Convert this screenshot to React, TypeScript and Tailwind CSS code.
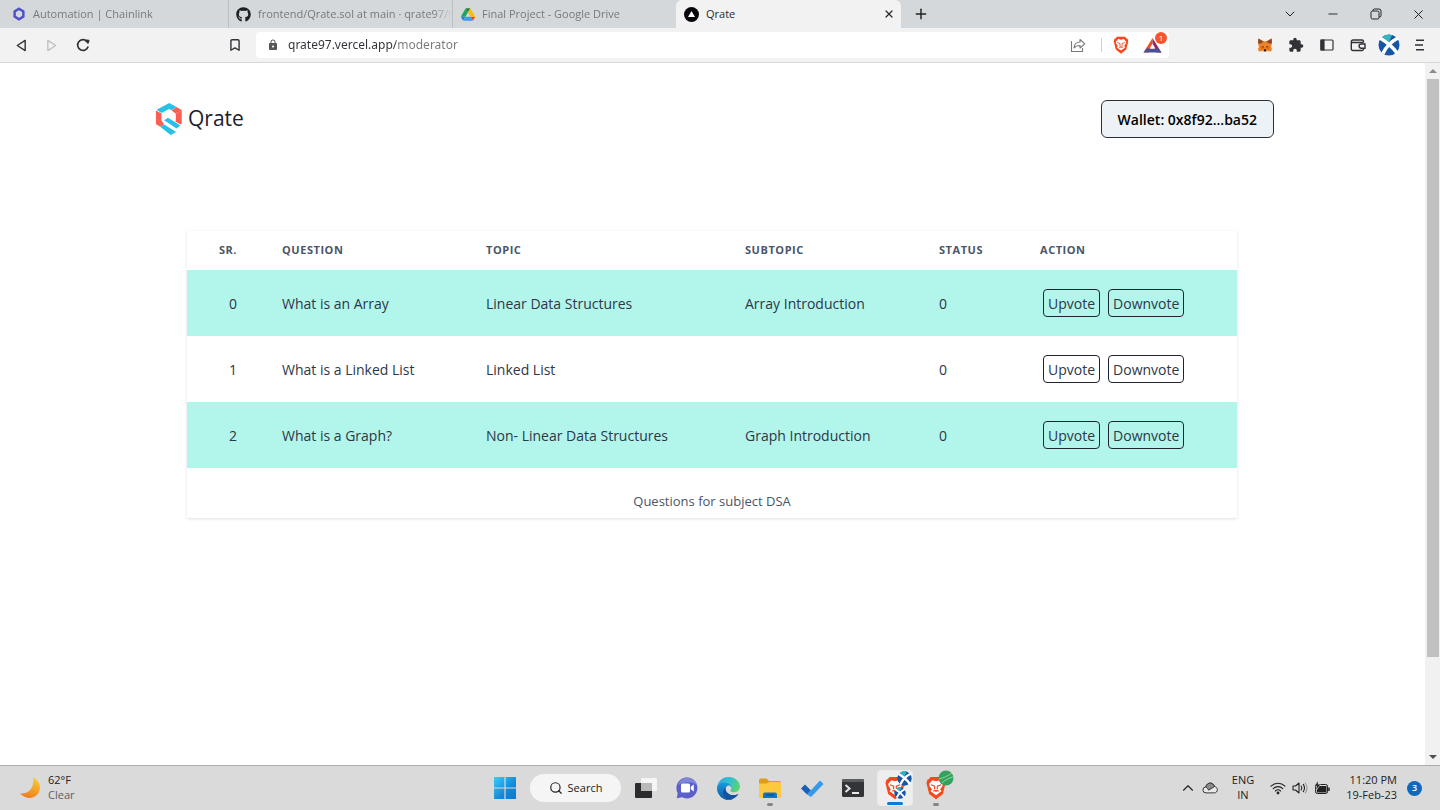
import type { ReactNode } from 'react'
import { Bookmark, ChevronDown, ChevronUp, Minus, Plus, Search, X } from 'lucide-react'
import { FaGithub } from 'react-icons/fa'
import { MdExtension, MdLock } from 'react-icons/md'
import { SiBrave } from 'react-icons/si'

const questions = [
  { id: 0, question: 'What is an Array', topic: 'Linear Data Structures', subtopic: 'Array Introduction', status: 0 },
  { id: 1, question: 'What is a Linked List', topic: 'Linked List', subtopic: '', status: 0 },
  { id: 2, question: 'What is a Graph?', topic: 'Non- Linear Data Structures', subtopic: 'Graph Introduction', status: 0 },
]

function ChainlinkIcon() {
  return (
    <svg viewBox="0 0 14 16" className="h-[14px] w-[14px] shrink-0">
      <path d="M7 2 12 5v6l-5 3-5-3V5z" fill="none" stroke="#4f4fcb" strokeWidth="2.8" />
    </svg>
  )
}

function DriveIcon() {
  return (
    <svg viewBox="0 0 87.3 78" className="h-[13px] w-[14px] shrink-0">
      <path d="m6.6 66.85 3.85 6.65c.8 1.4 1.95 2.5 3.3 3.3L27.5 53H0c0 1.55.4 3.1 1.2 4.5z" fill="#2a7de1" />
      <path d="M43.65 25 29.9 1.2c-1.35.8-2.5 1.9-3.3 3.3l-25.4 44A9.06 9.06 0 0 0 0 53h27.5z" fill="#1fa463" />
      <path d="M73.55 76.8c1.35-.8 2.5-1.9 3.3-3.3l1.6-2.75L86.1 57.5c.8-1.4 1.2-2.95 1.2-4.5H59.8l5.85 11.5z" fill="#ea4335" />
      <path d="M43.65 25 57.4 1.2C56.05.4 54.5 0 52.9 0H34.4c-1.6 0-3.15.45-4.5 1.2z" fill="#188038" />
      <path d="M59.8 53H27.5L13.75 76.8c1.35.8 2.9 1.2 4.5 1.2h50.8c1.6 0 3.15-.45 4.5-1.2z" fill="#3b9cf0" />
      <path d="m73.4 26.5-12.7-22c-.8-1.4-1.95-2.5-3.3-3.3L43.65 25 59.8 53h27.45c0-1.55-.4-3.1-1.2-4.5z" fill="#fbbc04" />
    </svg>
  )
}

function VercelIcon() {
  return (
    <svg viewBox="0 0 15 15" className="h-[15px] w-[15px] shrink-0">
      <circle cx="7.5" cy="7.5" r="7.5" fill="#08080c" />
      <path d="M7.5 4 11 10H4z" fill="#fff" />
    </svg>
  )
}

// white lion on the orange shield
function BraveIcon({ className = '' }: { className?: string }) {
  return (
    <svg viewBox="0 0 22 26" className={className}>
      <path d="M5 1h12l2 2.500 1.500.3L21.500 8l-.6 2L18.500 19.500 11 25.500 3.500 19.500 1.100 10 .5 8l1-4.200L3 3.500z" fill="#f9461c" />
      <path d="M7 4.500 11 5.500 15 4.500l3.500 3.800-.5 2.700-2.500 3.500 1.500 2-2 1.500-4 3-4-3-2-1.500 1.500-2L4 11l-.5-2.700z" fill="#fff" />
      <path d="M5.500 9.500 9.500 11v3.500M16.500 9.500 12.500 11v3.500M8 16.500l3-1 3 1M11 15.500v2" fill="none" stroke="#f9461c" strokeWidth="1.300" />
    </svg>
  )
}

function MetamaskIcon() {
  return (
    <svg viewBox="0 0 32 30" className="h-[14px] w-4">
      <path d="M2 1 13 7h6L30 1l1 10-2 8 2 5-2 5-8-1-3 2h-4l-3-2-8 1-2-5 2-5-2-8z" fill="#ee8427" />
      <path d="M2 1 13 8 8 12l-6 0-1-3zM30 1 19 8l5 4h6l1-3z" fill="#8a4a2c" />
      <path d="m6 18 7-1 1 5-6 2zM26 18l-7-1-1 5 6 2z" fill="#d9691c" />
      <path d="m9 17 4 1v3zM23 17l-4 1v3z" fill="#2b3340" />
      <path d="m13 26 1-2h4l1 2-1 3h-4z" fill="#241b17" />
      <path d="m11 26 2-1 1 4 4 0 1-4 2 1-3 4h-4z" fill="#d8c4b3" />
    </svg>
  )
}

function ProfileIcon({ className = '' }: { className?: string }) {
  return (
    <svg viewBox="0 0 22 22" className={className}>
      <circle cx="11" cy="11" r="10.5" fill="#1756a5" />
      <path d="M4 3A10.5 10.5 0 0 1 14 1l-3 7z" fill="#35b3c2" />
      <path d="M2 4c5 3 12 8 17 15M20 4C14 7 8 13 5 19.500" stroke="#fff" strokeWidth="3.600" fill="none" />
    </svg>
  )
}

function ShareIcon() {
  return (
    <svg viewBox="0 0 16 16" className="h-4 w-4" fill="none" stroke="#777a7d" strokeWidth="1.1" strokeLinejoin="round">
      <path d="M1.5 4v10.5h11V11" />
      <path d="M4 11c.3-4 2.500-6 6-6V2.500l4.800 4.300L10 11V8.500C7.500 8.500 5.500 9 4 11z" />
    </svg>
  )
}

function BatIcon() {
  return (
    <svg viewBox="0 0 24 18" className="h-[18px] w-6">
      <path d="M9.500 2 .500 16.500h5L9.500 9z" fill="#ee5024" />
      <path d="M9.500 2 18.500 16.500h-5L9.500 9z" fill="#8f2d62" />
      <path d="M.5 16.500l3-4h12l3 4z" fill="#4c5193" />
      <path d="M9.500 7.500 12.300 12.500H6.700z" fill="#fff" />
    </svg>
  )
}

function QrateLogo() {
  return (
    <svg viewBox="45 39 84 98" className="h-8 w-[28px]">
      <path d="M47 62 64 71v21l7 12-11 8-13-9zM126 62 108 72v20l-2 3 16 10 4-3z" fill="#fa5f52" />
      <path d="M49 60 88 39l22 12-15 10-8-4-23 13z" fill="#27c1e8" />
      <path d="M110 51 127 61 108 72 95 62z" fill="#fa5f52" />
      <path d="M72 92 84 84l38 24-12 9z" fill="#27c1e8" />
      <path d="M60 112 71 104l38 24-17 9z" fill="#27c1e8" />
    </svg>
  )
}

function EdgeIcon() {
  return (
    <svg viewBox="0 0 256 256" className="h-[23px] w-[23px]">
      <defs>
        <linearGradient id="edgeTop" x1="0" y1="0.3" x2="1" y2="0.6">
          <stop offset="0" stopColor="#2aa8e0" />
          <stop offset="0.5" stopColor="#32c1cf" />
          <stop offset="1" stopColor="#5fd668" />
        </linearGradient>
        <linearGradient id="edgeMid" x1="0" y1="0" x2="0" y2="1">
          <stop offset="0" stopColor="#1b9de2" />
          <stop offset="1" stopColor="#0f59a4" />
        </linearGradient>
      </defs>
      <path d="M231.07 190.54c-3.400 1.780-6.930 3.330-10.550 4.640a101.900 101.900 0 0 1-35.900 6.460c-47.320 0-88.540-32.550-88.540-74.320A31.480 31.480 0 0 1 112.500 100c-42.800 1.800-53.800 46.400-53.800 72.530 0 73.880 68.100 81.370 82.760 81.370 7.910 0 19.840-2.300 27-4.560l1.310-.44a128.340 128.340 0 0 0 66.600-52.800 4 4 0 0 0-5.320-5.560z" fill="#12529f" />
      <path d="M105.730 241.420a79.200 79.200 0 0 1-22.740-21.340 80.720 80.720 0 0 1 29.530-120.100c3.120-1.470 8.450-4.130 15.540-4a32.350 32.350 0 0 1 25.690 13 31.880 31.880 0 0 1 6.360 18.660c0-.21 24.460-79.600-80-79.600-43.900 0-80 41.660-80 78.210a130.150 130.150 0 0 0 12.110 56 128 128 0 0 0 156.380 67.110 75.550 75.550 0 0 1-62.780-8z" fill="url(#edgeMid)" />
      <path d="M152.330 148.860c-.81 1.050-3.300 2.500-3.300 5.660 0 2.610 1.700 5.120 4.720 7.230 14.380 10 41.490 8.680 41.560 8.680a59.560 59.560 0 0 0 30.270-8.350A61.380 61.380 0 0 0 256 109.200c.26-22.410-8-37.310-11.340-43.910C223.460 23.840 177.720 0 128 0A128 128 0 0 0 0 126.200c.48-36.540 36.800-66.050 80-66.050 3.500 0 23.460.34 42 10.070 16.340 8.580 24.900 18.940 30.850 29.210 6.180 10.670 7.280 24.150 7.280 29.520 0 5.370-2.740 13.330-7.800 19.910z" fill="url(#edgeTop)" />
    </svg>
  )
}

function WindowsIcon() {
  return (
    <svg viewBox="0 0 22 22" className="h-[22px] w-[22px]">
      <defs>
        <linearGradient id="win" x1="0" y1="0" x2="1" y2="1">
          <stop offset="0" stopColor="#3ccbf4" />
          <stop offset="0.6" stopColor="#1588d8" />
          <stop offset="1" stopColor="#0a78d0" />
        </linearGradient>
      </defs>
      <path d="M0 0h10.400v10.400H0zM11.600 0H22v10.400H11.600zM0 11.600h10.400V22H0zM11.600 11.600H22V22H11.600z" fill="url(#win)" />
    </svg>
  )
}

function TaskViewIcon() {
  return (
    <svg viewBox="0 0 22 22" className="h-[22px] w-[22px]">
      <rect x="0" y="6" width="17" height="15" rx="1" fill="#2b2b30" />
      <rect x="6" y="1" width="16" height="13" rx="1" fill="#f5f5f5" />
      <rect x="6" y="6" width="11" height="8" fill="#b9b9b9" />
    </svg>
  )
}

function ChatIcon() {
  return (
    <svg viewBox="0 0 22 22" className="h-[22px] w-[22px]">
      <path d="M11 .5A10.500 10.500 0 1 1 6 20.300L.8 21.300l.9-5.200A10.500 10.500 0 0 1 11 .5z" fill="#5b5fc7" />
      <path d="M11 .5A10.500 10.500 0 0 1 21 8C15 4 8 5 2 8 3.500 3.500 7 .5 11 .5z" fill="#7f86d8" />
      <rect x="5" y="6.500" width="9" height="9" rx="1.500" fill="#fff" />
      <path d="m14.800 9.800 3-2.300v7l-3-2.300z" fill="#fff" />
    </svg>
  )
}

function ExplorerIcon() {
  return (
    <svg viewBox="0 0 24 22" className="h-[22px] w-6">
      <path d="M1 3a1.500 1.500 0 0 1 1.500-1.500h6L11 4h10.500A1.500 1.500 0 0 1 23 5.500V9H1z" fill="#e09b1d" />
      <path d="M1 6.500h8L11 5h11a1 1 0 0 1 1 1v14a1 1 0 0 1-1 1H2a1 1 0 0 1-1-1z" fill="#fdc93f" />
      <path d="M5 21v-3.500A2 2 0 0 1 7 15.500h10a2 2 0 0 1 2 2V21z" fill="#1272c4" />
      <path d="M8 18h8" stroke="#0b4f94" strokeWidth="1.300" />
    </svg>
  )
}

function TodoIcon() {
  return (
    <svg viewBox="0 0 24 20" className="h-5 w-6">
      <path d="m1 10.500 4-4 6 6-4 4z" fill="#1a5fb4" />
      <path d="M7 16.500 20 2.500l3.500 3.500-12.500 13z" fill="#3699ea" />
    </svg>
  )
}

function TerminalIcon() {
  return (
    <svg viewBox="0 0 24 20" className="h-5 w-6">
      <rect x="1" y="1" width="22" height="18" rx="1.500" fill="#333437" />
      <path d="M1 4V2.500A1.500 1.500 0 0 1 2.500 1h19A1.500 1.500 0 0 1 23 2.500V4z" fill="#5d5e61" />
      <path d="m4.500 7 4 3.500-4 3.500" fill="none" stroke="#e4e4e4" strokeWidth="2" />
      <path d="M11 15h7" stroke="#fff" strokeWidth="1.800" />
    </svg>
  )
}

function WifiIcon() {
  return (
    <svg viewBox="0 0 16 14" className="h-[14px] w-4" fill="none" stroke="#222" strokeWidth="1.100" strokeLinecap="round">
      <path d="M1 5.200c4-4 10-4 14 0M3.200 7.600c2.800-2.700 6.800-2.700 9.600 0M5.400 10c1.500-1.400 3.700-1.400 5.200 0" />
      <circle cx="8" cy="12" r="0.900" fill="#222" />
    </svg>
  )
}

function VolumeIcon() {
  return (
    <svg viewBox="0 0 16 14" className="h-[14px] w-4" fill="none" stroke="#222" strokeWidth="1.100" strokeLinecap="round" strokeLinejoin="round">
      <path d="M1 5v4h2.500L7 12V2L3.500 5z" />
      <path d="M9.200 5c.8 1.200.8 2.800 0 4M11.300 3.400c1.500 2.200 1.500 5 0 7.200" />
      <path d="M13.300 2c2 3 2 7 0 10" stroke="#999" />
    </svg>
  )
}

function BatteryIcon() {
  return (
    <svg viewBox="0 0 16 14" className="h-[14px] w-4">
      <rect x="1.500" y="3.500" width="12" height="9" rx="1.800" fill="none" stroke="#222" />
      <path d="M14.200 6.500h1.500v3.600h-1.500z" fill="#222" />
      <path d="M5.500 5H12.500v6.500H2.800V9z" fill="#222" />
      <path d="M4 0 .5 5h2.200l-.8 4L6.500 3.500H4z" fill="#222" stroke="#dadada" strokeWidth=".4" />
    </svg>
  )
}

function CloudIcon() {
  return (
    <svg viewBox="0 0 18 14" className="h-[14px] w-4" stroke="#333" strokeWidth="1.100">
      <path d="M4.500 12.500a3.300 3.300 0 0 1-.3-6.600C5 3 7 1.500 9.200 1.500c2.400 0 4.200 1.500 4.800 3.900 2 .2 3.300 1.700 3.300 3.500 0 2-1.500 3.600-3.500 3.600z" fill="#e9e9e9" />
      <path d="M4.200 5.900C5 3 7 1.500 9.200 1.500c2.400 0 4.200 1.500 4.800 3.900l-6.500 4C6.500 7.500 5.500 6.500 4.200 5.900z" fill="#8b8b8b" />
    </svg>
  )
}

function Tab({ icon, title, className = '' }: { icon: ReactNode; title: string; className?: string }) {
  return (
    <div className={`flex min-w-0 items-center gap-[7px] border-r border-[#bcbfc2] ${className}`}>
      {icon}
      <span className="min-w-0 flex-1 overflow-hidden whitespace-nowrap text-[#77797c] mask-[linear-gradient(90deg,#000_90%,transparent)]">
        {title}
      </span>
    </div>
  )
}

function ToolButton({ label, children }: { label: string; children: ReactNode }) {
  return (
    <button aria-label={label} className="flex h-7 w-[31px] shrink-0 items-center justify-center text-[#303236]">
      {children}
    </button>
  )
}

function WindowButton({ label, children }: { label: string; children: ReactNode }) {
  return (
    <button aria-label={label} className="flex h-7 w-[43px] items-center justify-center text-[#222]">
      {children}
    </button>
  )
}

function TaskButton({ label, children, active, running }: { label: string; children: ReactNode; active?: boolean; running?: boolean }) {
  return (
    <button
      aria-label={label}
      className={`relative flex h-9 w-9 items-center justify-center rounded ${active ? 'border border-[#ebebeb] bg-[#eeeeee]' : ''}`}
    >
      {children}
      {active && <span className="absolute bottom-0 h-[3px] w-4 rounded-full bg-[#1479cf]" />}
      {running && <span className="absolute bottom-0 h-[3px] w-[6px] rounded-full bg-[#858585]" />}
    </button>
  )
}

function BrowserChrome() {
  return (
    <header className="border-b border-[#d6d7d8] bg-[#f2f2f3]">
      <div className="flex h-7 bg-[#d5d8db] text-[11px]">
        <Tab icon={<ChainlinkIcon />} title="Automation | Chainlink" className="w-[229px] pl-3" />
        <Tab icon={<FaGithub className="h-[15px] w-[15px] shrink-0 text-[#1c1f24]" />} title="frontend/Qrate.sol at main · qrate97/fr" className="w-[224px] pl-[7px]" />
        <Tab icon={<DriveIcon />} title="Final Project - Google Drive" className="w-[223px] border-r-0 pl-2" />
        <div className="flex w-[225px] items-center gap-[7px] rounded-t-md bg-[#f2f2f3] pl-2 text-[#2a2b2d]">
          <VercelIcon />
          <span className="flex-1">Qrate</span>
          <button aria-label="Close tab" className="flex w-6 justify-center">
            <X size={12} strokeWidth={2.5} />
          </button>
        </div>
        <button aria-label="New tab" className="flex w-10 items-center justify-center text-[#222]">
          <Plus size={16} strokeWidth={2.2} />
        </button>
        <div className="ml-auto flex">
          <WindowButton label="Search tabs"><ChevronDown size={16} strokeWidth={1.5} /></WindowButton>
          <WindowButton label="Minimize"><Minus size={14} strokeWidth={1.6} /></WindowButton>
          <WindowButton label="Restore">
            <svg viewBox="0 0 12 12" className="h-3 w-3" fill="none" stroke="currentColor">
              <rect x="1" y="3" width="8" height="8" rx="1.500" />
              <path d="M3 3V2.500A1.500 1.500 0 0 1 4.500 1H9a2 2 0 0 1 2 2v4.500A1.500 1.500 0 0 1 9.500 9H9" />
            </svg>
          </WindowButton>
          <WindowButton label="Close"><X size={15} strokeWidth={1.6} /></WindowButton>
        </div>
      </div>

      <div className="flex h-[34px] items-center px-[5px]">
        <ToolButton label="Back">
          <svg viewBox="0 0 12 14" className="h-[13px] w-3" fill="none" stroke="currentColor" strokeWidth="1.500" strokeLinejoin="round">
            <path d="M10.500 1.500v11L2 7z" />
          </svg>
        </ToolButton>
        <ToolButton label="Forward">
          <svg viewBox="0 0 12 14" className="h-[13px] w-3 text-[#bfc0c2]" fill="none" stroke="currentColor" strokeWidth="1.500" strokeLinejoin="round">
            <path d="M1.500 1.500v11L10 7z" />
          </svg>
        </ToolButton>
        <ToolButton label="Reload">
          <svg viewBox="0 0 14 14" className="h-[14px] w-[14px]" fill="none" stroke="currentColor" strokeWidth="1.700">
            <path d="M12.200 8.600A5.400 5.400 0 1 1 11 3.300" />
            <path d="M8.500 2.500c1.500-1 3.500-1.500 5-.5-.2 1.800-.5 3-1.500 4z" fill="currentColor" stroke="none" />
          </svg>
        </ToolButton>
        <div className="ml-[121px] mr-[6px] flex">
          <ToolButton label="Bookmark this page"><Bookmark size={14} strokeWidth={2.400} /></ToolButton>
        </div>
        <div className="flex h-[26px] flex-1 items-center rounded bg-white pl-[11px] pr-[2px]">
          <MdLock className="h-3 w-3 shrink-0 text-[#55575a]" />
          <input
            aria-label="Address"
            defaultValue="qrate97.vercel.app/moderator"
            className="ml-[9px] min-w-0 flex-1 bg-[linear-gradient(90deg,#303236_0_108px,#77797c_108px)] bg-clip-text font-['Noto_Sans',sans-serif] text-[12px] text-transparent outline-none"
          />
          <button aria-label="Share"><ShareIcon /></button>
          <span className="ml-[15px] mr-[11px] h-[14px] w-px bg-[#c9d0d4]" />
          <button aria-label="Brave Shields"><BraveIcon className="h-[18px] w-4" /></button>
          <button aria-label="Brave Rewards" className="relative ml-[14px]">
            <BatIcon />
            <span className="absolute -top-1 right-0 flex h-3 w-3 items-center justify-center rounded-full bg-[#fb542b] text-[8px] text-white">1</span>
          </button>
        </div>
        <div className="ml-[80px] flex items-center">
          <ToolButton label="MetaMask"><MetamaskIcon /></ToolButton>
          <ToolButton label="Extensions"><MdExtension size={16} /></ToolButton>
          <ToolButton label="Sidebar">
            <svg viewBox="0 0 14 12" className="h-3 w-[14px]" fill="none" stroke="currentColor" strokeWidth="1.200">
              <rect x="1" y="1" width="12" height="10" rx="1" />
              <path d="M1 1h3v10H1z" fill="currentColor" />
            </svg>
          </ToolButton>
          <ToolButton label="Wallet">
            <svg viewBox="0 0 16 14" className="h-[14px] w-4" fill="none" stroke="currentColor" strokeWidth="1.400">
              <path d="M13.500 4.500v-1A1.500 1.500 0 0 0 12 2H3a1.700 1.700 0 0 0-1.700 1.700V11A1.500 1.500 0 0 0 2.800 12.500H12a1.500 1.500 0 0 0 1.500-1.500M1.500 4.500h12" />
              <path d="M15 6h-3.800a2 2 0 0 0 0 4.200H15z" />
            </svg>
          </ToolButton>
          <ToolButton label="Profile"><ProfileIcon className="h-[22px] w-[22px]" /></ToolButton>
          <ToolButton label="Menu">
            <svg viewBox="0 0 10 12" className="h-3 w-[10px]" stroke="currentColor" strokeWidth="1.500">
              <path d="M1 1.200h8M0 6h8M1 10.800h8" />
            </svg>
          </ToolButton>
        </div>
      </div>
    </header>
  )
}

function QuestionTable() {
  return (
    <div className="ml-8 mr-[37px] mt-[93px] shadow-[0_1px_3px_rgba(0,0,0,0.12)]">
      <table className="w-full table-fixed text-left text-[14px] text-[#2d3748]">
        <caption className="h-[50px] caption-bottom pt-[23px] text-center text-[13px] font-medium leading-5 text-[#4a5568]">
          Questions for subject DSA
        </caption>
        <colgroup>
          <col className="w-[72px]" />
          <col className="w-[204px]" />
          <col className="w-[259px]" />
          <col className="w-[194px]" />
          <col className="w-[101px]" />
          <col className="w-[220px]" />
        </colgroup>
        <thead>
          <tr className="h-[39px] text-[11px] uppercase tracking-wider text-[#4a5568]">
            <th className="pr-[22px] text-right font-bold">Sr.</th>
            <th className="px-[23px] font-bold">Question</th>
            <th className="px-[23px] font-bold">Topic</th>
            <th className="px-[23px] font-bold">Subtopic</th>
            <th className="px-[23px] font-bold">Status</th>
            <th className="px-[23px] font-bold">Action</th>
          </tr>
        </thead>
        <tbody>
          {questions.map((q) => (
            <tr key={q.id} className="h-[66px] odd:bg-[#b2f5ea]">
              <td className="pr-[22px] text-right">{q.id}</td>
              <td className="whitespace-nowrap px-[23px]">{q.question}</td>
              <td className="whitespace-nowrap px-[23px]">{q.topic}</td>
              <td className="whitespace-nowrap px-[23px]">{q.subtopic}</td>
              <td className="px-[23px]">{q.status}</td>
              <td className="pl-[26px]">
                <div className="flex gap-2">
                  <button className="h-7 rounded border border-[#1f2530] px-1">Upvote</button>
                  <button className="h-7 rounded border border-[#1f2530] px-1">Downvote</button>
                </div>
              </td>
            </tr>
          ))}
        </tbody>
      </table>
    </div>
  )
}

function Scrollbar() {
  return (
    <div className="flex w-[15px] shrink-0 flex-col items-center bg-[#f1f1f1] py-[6px]">
      <svg viewBox="0 0 8 4" className="h-1 w-2"><path d="M0 4 4 0l4 4z" fill="#8b8b8b" /></svg>
      <div className="mt-[6px] w-3 flex-[576] bg-[#c1c1c1]" />
      <div className="flex-[98]" />
      <svg viewBox="0 0 8 4" className="h-1 w-2"><path d="M0 0h8L4 4z" fill="#505050" /></svg>
    </div>
  )
}

function Taskbar() {
  return (
    <footer className="flex h-[45px] items-center border-t border-[#adadad] bg-[#dadada] text-[11px] text-[#222]">
      <div className="flex flex-1 items-center gap-[7px] pl-[19px]">
        <svg viewBox="0 0 22 22" className="h-[22px] w-[22px]">
          <defs>
            <linearGradient id="moon" x1="0.700" y1="0" x2="0.300" y2="1">
              <stop offset="0" stopColor="#f9c932" />
              <stop offset="1" stopColor="#ee7c1c" />
            </linearGradient>
          </defs>
          <path d="M14 0.500C20 3 22.500 9.500 20 15 17 21.500 8 23.500 1 16.500 9 17.500 16 11 14 .5z" fill="url(#moon)" />
        </svg>
        <div className="pb-0.5 leading-[15px]">
          <p>62°F</p>
          <p className="text-[#606060]">Clear</p>
        </div>
      </div>

      <div className="flex items-center gap-[7px]">
        <TaskButton label="Start"><WindowsIcon /></TaskButton>
        <button className="flex h-7 w-[91px] items-center justify-center gap-[5px] rounded-full bg-[#f5f5f5]">
          <Search size={14} strokeWidth={2} />
          Search
        </button>
        <div className="flex w-[326px] justify-between">
          <TaskButton label="Task view"><TaskViewIcon /></TaskButton>
          <TaskButton label="Chat"><ChatIcon /></TaskButton>
          <TaskButton label="Edge"><EdgeIcon /></TaskButton>
          <TaskButton label="File Explorer" running><ExplorerIcon /></TaskButton>
          <TaskButton label="To Do"><TodoIcon /></TaskButton>
          <TaskButton label="Terminal"><TerminalIcon /></TaskButton>
          <TaskButton label="Brave" active>
            <BraveIcon className="h-6 w-5" />
            <ProfileIcon className="absolute right-0 top-0 h-[15px] w-[15px]" />
            <ProfileIcon className="absolute bottom-[6px] right-[6px] h-3 w-3" />
          </TaskButton>
          <TaskButton label="Brave second profile" running>
            <BraveIcon className="h-6 w-5" />
            <svg viewBox="0 0 16 16" className="absolute right-0 top-0 h-4 w-4">
              <circle cx="8" cy="8" r="7.500" fill="#35a15a" />
              <path d="M1 9c4-1 9-3 13-6M4 13c3-3 7-5 11-6" stroke="#8fd6a5" fill="none" />
            </svg>
          </TaskButton>
        </div>
      </div>

      <div className="flex flex-1 items-center justify-end pr-[18px]">
        <button aria-label="Show hidden icons"><ChevronUp size={18} strokeWidth={1.500} /></button>
        <span className="ml-[5px]"><CloudIcon /></span>
        <div className="ml-[14px] pb-0.5 text-center leading-[15px]">
          <p>ENG</p>
          <p>IN</p>
        </div>
        <div className="ml-4 flex gap-[6px]">
          <WifiIcon />
          <VolumeIcon />
          <BatteryIcon />
        </div>
        <div className="ml-4 whitespace-nowrap pb-0.5 text-right leading-[15px]">
          <p>11:20 PM</p>
          <p>19-Feb-23</p>
        </div>
        <span className="ml-[10px] flex h-[15px] w-[15px] items-center justify-center rounded-full bg-[#1068bf] text-[9px] font-semibold text-white">3</span>
      </div>
    </footer>
  )
}

export default function App() {
  return (
    <div className="flex min-h-screen flex-col bg-white font-['Open_Sans',sans-serif]">
      <BrowserChrome />
      <div className="flex flex-1">
        <main className="flex-1 pl-[155px] pr-[151px] pt-[37px]">
          <div className="flex items-center justify-between">
            <a href="#" className="flex items-center gap-[5px] text-[21px] text-[#1a202c]">
              <QrateLogo />
              Qrate
            </a>
            <button className="h-[38px] rounded-md border border-[#2b2f36] bg-[#edf2f7] px-4 text-[14px] font-semibold text-black">
              Wallet: 0x8f92...ba52
            </button>
          </div>
          <QuestionTable />
        </main>
        <Scrollbar />
      </div>
      <Taskbar />
    </div>
  )
}
